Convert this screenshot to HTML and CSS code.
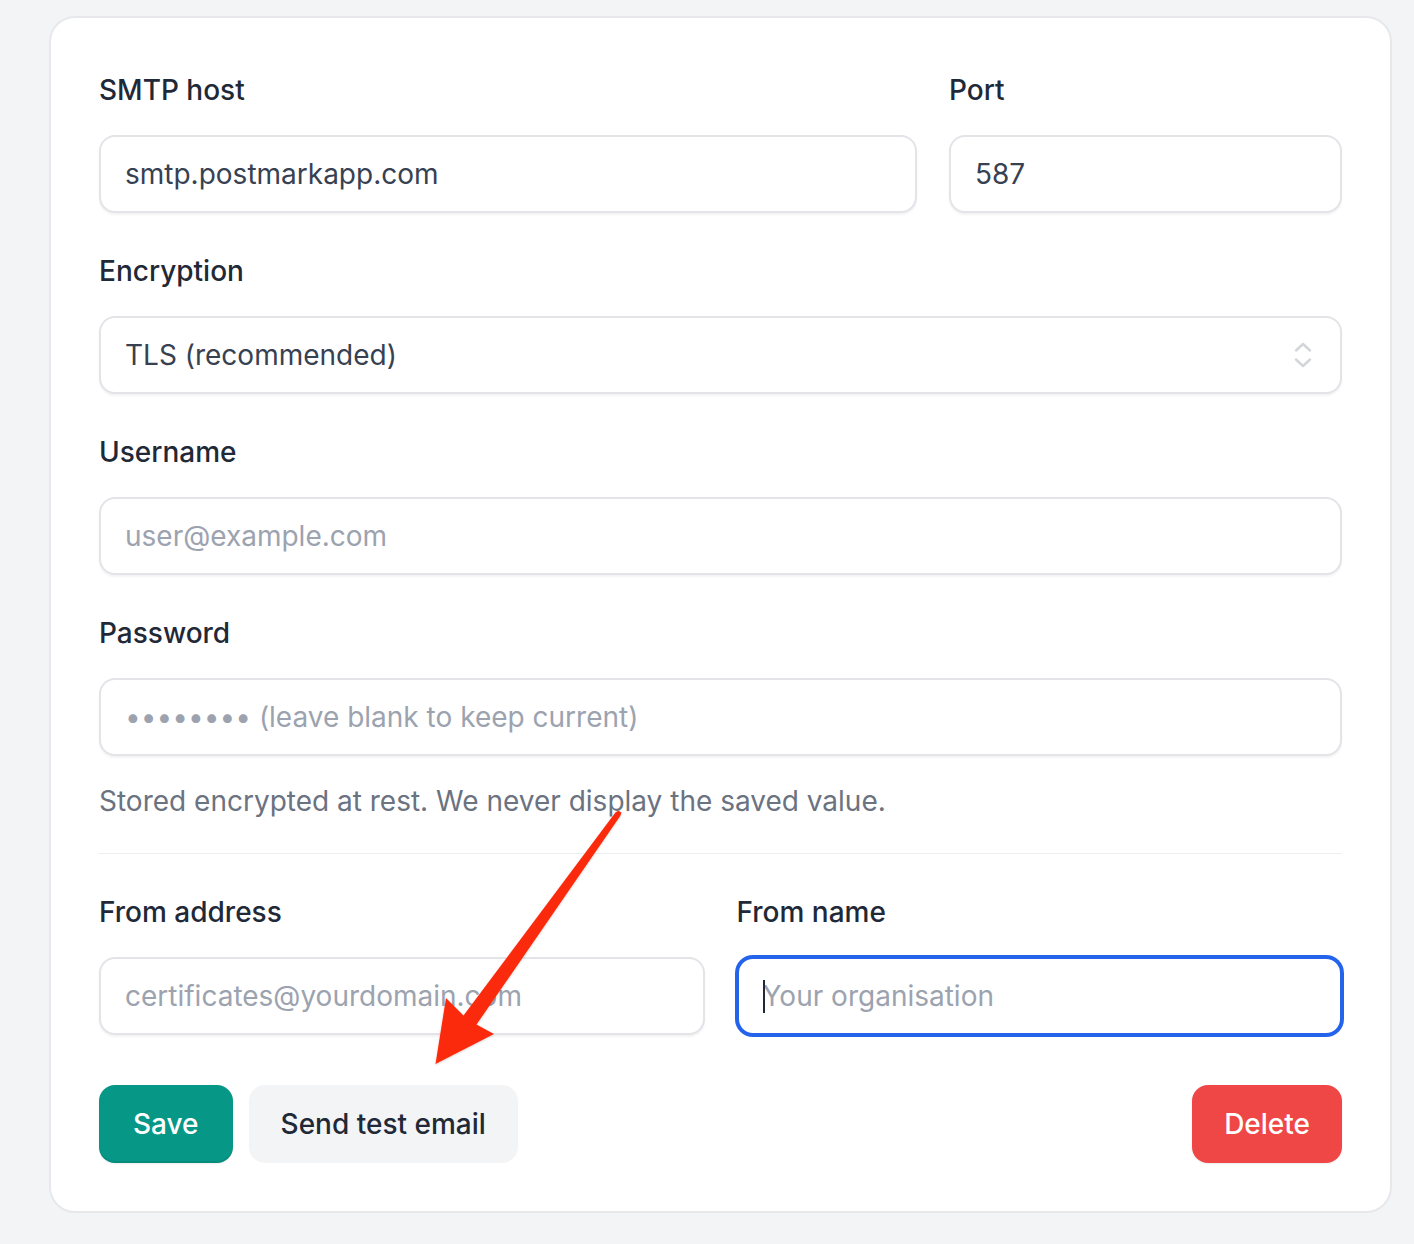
FILE: index.html
```html
<!DOCTYPE html>
<html lang="en">
<head>
<meta charset="utf-8">
<title>SMTP settings</title>
<link rel="stylesheet" href="styles.css">
</head>
<body>
<div class="page">
  <form class="card">
    <div class="row row-3">
      <div class="field span-2">
        <label class="label">SMTP host</label>
        <input class="input" type="text" value="smtp.postmarkapp.com">
      </div>
      <div class="field">
        <label class="label">Port</label>
        <input class="input" type="text" value="587">
      </div>
    </div>

    <div class="row">
      <div class="field">
        <label class="label">Encryption</label>
        <div class="select-wrap">
          <select class="input select">
            <option>TLS (recommended)</option>
          </select>
          <svg class="select-icon" width="20" height="28" viewBox="0 0 20 28" fill="none" stroke="#d4d5d9" stroke-width="2.4" stroke-linecap="round" stroke-linejoin="round"><path d="M3 9.5 L10 3 L17 9.5"/><path d="M3 18.5 L10 25 L17 18.5"/></svg>
        </div>
      </div>
    </div>

    <div class="row">
      <div class="field">
        <label class="label">Username</label>
        <input class="input" type="text" placeholder="user@example.com">
      </div>
    </div>

    <div class="row">
      <div class="field">
        <label class="label">Password</label>
        <input class="input" type="password" placeholder="•••••••• (leave blank to keep current)">
        <p class="hint">Stored encrypted at rest. We never display the saved value.</p>
      </div>
    </div>

    <div class="divider"></div>

    <div class="row row-2">
      <div class="field">
        <label class="label">From address</label>
        <input class="input" type="text" placeholder="certificates@yourdomain.com">
      </div>
      <div class="field">
        <label class="label">From name</label>
        <div class="focus-wrap">
          <input class="input focused" type="text" placeholder="Your organisation">
          <span class="caret"></span>
        </div>
      </div>
    </div>

    <div class="actions">
      <button type="button" class="btn btn-save">Save</button>
      <button type="button" class="btn btn-test">Send test email</button>
      <button type="button" class="btn btn-delete">Delete</button>
    </div>
  </form>

  <svg class="annotation" width="1414" height="1244" viewBox="0 0 1414 1244">
    <defs>
      <filter id="sh" x="-20%" y="-20%" width="140%" height="140%">
        <feDropShadow dx="0" dy="1" stdDeviation="1.2" flood-color="#000" flood-opacity="0.18"/>
      </filter>
    </defs>
    <polygon filter="url(#sh)" fill="#fc2b0b" points="615.6,812.3 618.5,810.8 621.4,812.6 620.4,815.7 476.5,1024.6 494,1034 435.5,1064 446,998 463.5,1015.4"/>
  </svg>
</div>
</body>
</html>
```

FILE: styles.css
```css
* { box-sizing: border-box; }

html, body {
  margin: 0;
  padding: 0;
  background: #f3f4f6;
}

body {
  font-family: Inter, "Noto Sans", "Liberation Sans", sans-serif;
  color: #1f2937;
}

.page {
  position: relative;
  width: 1414px;
  min-height: 1244px;
  padding: 16px 22px 30px 49px;
}

.card {
  background: #ffffff;
  border: 2px solid #e7e8eb;
  border-radius: 26px;
  padding: 52px 48px 48px 48px;
  margin: 0;
}

.row {
  display: grid;
  grid-template-columns: 1fr;
  column-gap: 32px;
}
.row + .row { margin-top: 38px; }
.row-3 { grid-template-columns: 1fr 1fr 1fr; }
.row-2 { grid-template-columns: 1fr 1fr; }
.span-2 { grid-column: span 2; }

.field {
  display: flex;
  flex-direction: column;
  min-width: 0;
}

.label {
  display: block;
  font-size: 28px;
  line-height: 40px;
  font-weight: 500;
  color: #1f2937;
  margin-bottom: 25px;
}

.input {
  display: block;
  width: 100%;
  height: 78px;
  margin: 0;
  padding: 0 24px;
  font-family: inherit;
  font-size: 28px;
  color: #374151;
  background: #ffffff;
  border: 2px solid #e3e4e8;
  border-radius: 16px;
  box-shadow: 0 2px 2px rgba(17, 24, 39, 0.05);
  outline: none;
}
.input::placeholder { color: #9ca3af; opacity: 1; }

.select-wrap { position: relative; }
.select {
  appearance: none;
  -webkit-appearance: none;
}
.select-icon {
  position: absolute;
  right: 29px;
  top: 25px;
  pointer-events: none;
}

.hint {
  margin: 25px 0 0 0;
  font-size: 28px;
  line-height: 40px;
  color: #6b7280;
}

.divider {
  height: 1px;
  background: #eceef1;
  margin: 32px 0 38px 0;
}

.focus-wrap { position: relative; }
.focused {
  border-color: #2563eb;
  box-shadow: 0 0 0 2px #2563eb;
}
.caret {
  position: absolute;
  left: 26px;
  top: 23px;
  width: 2px;
  height: 33px;
  background: #1f2937;
}

.actions {
  display: flex;
  align-items: center;
  gap: 16px;
  margin-top: 50px;
}

.btn {
  height: 78px;
  padding: 0 32px;
  border: 0;
  border-radius: 16px;
  font-family: inherit;
  font-size: 28px;
  font-weight: 500;
  cursor: pointer;
}
.btn-save {
  background: #069787;
  color: #ffffff;
  padding: 0 34px;
  box-shadow: inset 0 -2px 0 rgba(0, 0, 0, 0.08), 0 1px 2px rgba(0, 0, 0, 0.08);
}
.btn-test {
  background: #f3f4f6;
  color: #1f2937;
}
.btn-delete {
  margin-left: auto;
  background: #ef4646;
  color: #ffffff;
  box-shadow: 0 1px 2px rgba(0, 0, 0, 0.08);
}

.annotation {
  position: absolute;
  top: 0;
  left: 0;
  pointer-events: none;
}
```
